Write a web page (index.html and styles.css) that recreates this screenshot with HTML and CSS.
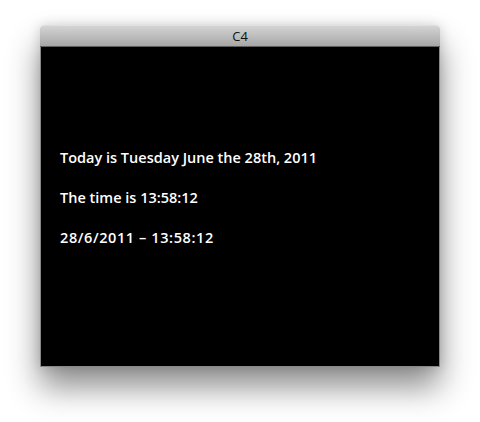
FILE: index.html
```html
<!DOCTYPE html>
<html>
<head>
<meta charset="utf-8">
<link rel="stylesheet" href="styles.css">
</head>
<body>
<div class="window">
  <div class="titlebar">C4</div>
  <div class="content">
    <p class="line">Today is Tuesday June the 28th, 2011</p>
    <p class="line">The time is 13:58:12</p>
    <p class="line dated">28/6/2011 – 13:58:12</p>
  </div>
</div>
</body>
</html>
```
FILE: styles.css
```css
html, body {
  margin: 0;
  padding: 0;
  background: #fff;
}
body {
  width: 480px;
  height: 422px;
  overflow: hidden;
  padding-top: 25px;
  box-sizing: border-box;
}
.window {
  width: 400px;
  margin-left: 40px;
  border-radius: 4px 4px 0 0;
  box-shadow: 0 20px 32px rgba(0,0,0,0.45), 0 0 12px rgba(0,0,0,0.15);
}
.titlebar {
  height: 22px;
  box-sizing: border-box;
  border-radius: 4px 4px 0 0;
  background: linear-gradient(#d4d4d4, #a6a6a6);
  border-top: 1px solid #e0e0e0;
  border-bottom: 1px solid #5e5e5e;
  text-align: center;
  font-family: "Open Sans", sans-serif;
  font-size: 13px;
  line-height: 21px;
  color: #111;
}
.content {
  height: 320px;
  background: #000;
  border: 1px solid #888;
  border-top: none;
  box-sizing: border-box;
  padding: 101px 20px 0 19px;
  display: flex;
  flex-direction: column;
  gap: 20px;
}
.line {
  margin: 0;
  color: #fff;
  font-family: "Open Sans", sans-serif;
  font-weight: 600;
  font-size: 14.5px;
  line-height: 20px;
}
.dated {
  letter-spacing: 0.6px;
}
```
